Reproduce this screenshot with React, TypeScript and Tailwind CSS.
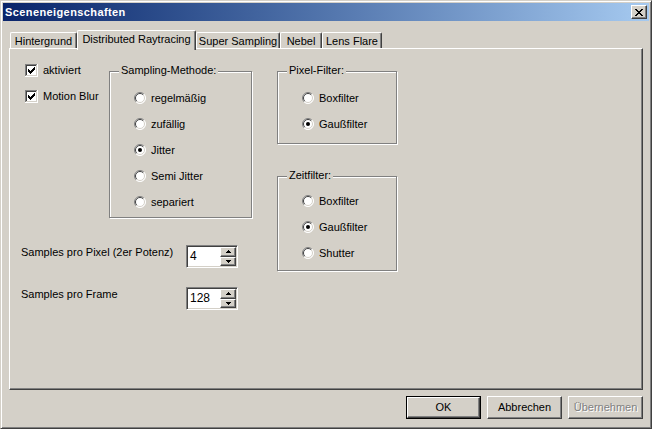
import React from "react";

const FONT = "font-['Liberation_Sans',Arial,sans-serif]";

function CheckBox({ label }: { label: string }) {
  return (
    <div className="flex items-center gap-[5px] h-[13px]">
      <svg width="13" height="13" viewBox="0 0 13 13" shapeRendering="crispEdges">
        <rect x="0" y="0" width="13" height="13" fill="#ffffff" />
        <rect x="0" y="0" width="12" height="1" fill="#808080" />
        <rect x="0" y="0" width="1" height="12" fill="#808080" />
        <rect x="1" y="1" width="10" height="1" fill="#404040" />
        <rect x="1" y="1" width="1" height="10" fill="#404040" />
        <rect x="1" y="11" width="11" height="1" fill="#d4d0c8" />
        <rect x="11" y="1" width="1" height="11" fill="#d4d0c8" />
        {[
          [3, 5],
          [4, 6],
          [5, 7],
          [6, 6],
          [7, 5],
          [8, 4],
          [9, 3],
        ].map(([x, y]) => (
          <rect key={x} x={x} y={y} width="1" height="3" fill="#000" />
        ))}
      </svg>
      <span>{label}</span>
    </div>
  );
}

function Radio({ label, checked }: { label: string; checked?: boolean }) {
  return (
    <div className="flex items-center gap-[5px] h-[12px]">
      <svg width="12" height="12" viewBox="0 0 12 12">
        <circle cx="6" cy="6" r="5.5" fill="#ffffff" />
        <path d="M2.1 9.9 A5.5 5.5 0 0 1 9.9 2.1" stroke="#808080" strokeWidth="1" fill="none" />
        <path d="M9.9 2.1 A5.5 5.5 0 0 1 2.1 9.9" stroke="#ffffff" strokeWidth="1" fill="none" />
        <path d="M2.8 9.2 A4.5 4.5 0 0 1 9.2 2.8" stroke="#404040" strokeWidth="1" fill="none" />
        <path d="M9.2 2.8 A4.5 4.5 0 0 1 2.8 9.2" stroke="#d4d0c8" strokeWidth="1" fill="none" />
        {checked && <circle cx="6" cy="6" r="2" fill="#000" />}
      </svg>
      <span>{label}</span>
    </div>
  );
}

function Group({
  label,
  className,
  children,
  pt,
}: {
  label: string;
  className: string;
  children: React.ReactNode;
  pt: string;
}) {
  return (
    <div
      className={`relative border border-[#808080] shadow-[1px_1px_0_#ffffff,inset_1px_1px_0_#ffffff] ${className}`}
    >
      <span className="absolute -top-[8px] left-[9px] bg-[#d4d0c8] px-[2px] leading-[13px]">
        {label}
      </span>
      <div className={`flex flex-col gap-[14px] pl-[24px] ${pt}`}>{children}</div>
    </div>
  );
}

function Spinner({ value }: { value: string }) {
  return (
    <div className="flex w-[52px] h-[23px] bg-white border border-t-[#808080] border-l-[#808080] border-r-white border-b-white shadow-[inset_1px_1px_0_#404040,inset_-1px_-1px_0_#d4d0c8] p-[1px]">
      <div className="flex-1 flex items-center pl-[2px] text-[12px]">{value}</div>
      <div className="flex flex-col w-[16px]">
        {[0, 1].map((i) => (
          <div
            key={i}
            className="flex-1 flex items-center justify-center bg-[#d4d0c8] border border-t-white border-l-white border-r-[#404040] border-b-[#404040] shadow-[inset_-1px_-1px_0_#808080]"
          >
            <svg width="5" height="3" viewBox="0 0 5 3" shapeRendering="crispEdges">
              {i === 0 ? (
                <path d="M2 0h1v1h1v1h1v1H0V2h1V1h1z" fill="#000" />
              ) : (
                <path d="M0 0h5v1H4v1H3v1H2V2H1V1H0z" fill="#000" />
              )}
            </svg>
          </div>
        ))}
      </div>
    </div>
  );
}

function Tab({ label, w, selected }: { label: string; w: string; selected?: boolean }) {
  if (selected) {
    return (
      <div
        className={`relative z-10 ${w} h-[20px] -mb-[2px] bg-[#d4d0c8] rounded-t-[2px] border-t border-l border-r border-t-white border-l-white border-r-[#404040] shadow-[inset_-1px_0_0_#808080] flex justify-center pt-[2px] leading-[13px]`}
      >
        {label}
      </div>
    );
  }
  return (
    <div
      className={`${w} h-[16px] bg-[#d4d0c8] rounded-t-[2px] border-t border-l border-r border-t-white border-l-white border-r-[#404040] shadow-[inset_-1px_0_0_#808080] flex justify-center pt-[2px] leading-[13px]`}
    >
      {label}
    </div>
  );
}

function Button({
  label,
  isDefault,
  disabled,
}: {
  label: string;
  isDefault?: boolean;
  disabled?: boolean;
}) {
  const inner = (
    <div
      className={`w-full h-full flex items-center justify-center border border-t-white border-l-white border-r-[#404040] border-b-[#404040] shadow-[inset_-1px_-1px_0_#808080] ${
        disabled ? "text-[#808080] [text-shadow:1px_1px_0_#ffffff]" : "text-black"
      }`}
    >
      {label}
    </div>
  );
  return (
    <div className={`w-[75px] h-[23px] ${isDefault ? "border border-black" : ""}`}>{inner}</div>
  );
}

export default function App() {
  return (
    <div
      className={`${FONT} text-[11px] leading-[13px] text-black w-[652px] h-[429px] bg-[#d4d0c8] border border-t-[#d4d0c8] border-l-[#d4d0c8] border-r-[#404040] border-b-[#404040] shadow-[inset_1px_1px_0_#ffffff,inset_-1px_-1px_0_#808080] p-[2px] overflow-hidden`}
    >
      {/* Title bar */}
      <div className="h-[18px] flex items-center justify-between bg-linear-to-r from-[#0a246a] to-[#a6caf0] pl-[2px] pr-[2px]">
        <span className="text-white font-bold tracking-[0.4px]">Sceneneigenschaften</span>
        <div className="w-[16px] h-[14px] bg-[#d4d0c8] border border-t-white border-l-white border-r-[#404040] border-b-[#404040] shadow-[inset_-1px_-1px_0_#808080] flex items-center justify-center">
          <svg width="8" height="7" viewBox="0 0 8 7" shapeRendering="crispEdges">
            <path
              d="M0 0h2v1h1v1h2V1h1V0h2v1H7v1H6v1H5v1h1v1h1v1h1v1H6V6H5V5H3v1H2v1H0V6h1V5h1V4h1V3H2V2H1V1H0z"
              fill="#000"
            />
          </svg>
        </div>
      </div>

      <div className="px-[6px]">
        {/* Tabs */}
        <div className="flex items-end h-[18px] mt-[9px]">
          <div className="ml-[1px]" />
          <Tab label="Hintergrund" w="w-[67px]" />
          <Tab label="Distributed Raytracing" w="w-[119px]" selected />
          <Tab label="Super Sampling" w="w-[84px]" />
          <Tab label="Nebel" w="w-[42px]" />
          <Tab label="Lens Flare" w="w-[60px]" />
        </div>

        {/* Panel */}
        <div className="h-[342px] border border-t-white border-l-white border-r-[#404040] border-b-[#404040] shadow-[inset_-1px_-1px_0_#808080]">
          <div className="flex pl-[11px]">
            {/* Column A */}
            <div className="flex flex-col w-[231px]">
              <div className="flex items-start">
                <div className="w-[88px] pl-[4px] pt-[15px] flex flex-col gap-[13px]">
                  <CheckBox label="aktiviert" />
                  <CheckBox label="Motion Blur" />
                </div>
                <Group label="Sampling-Methode:" className="mt-[22px] w-[143px] h-[147px]" pt="pt-[20px]">
                  <Radio label="regelmäßig" />
                  <Radio label="zufällig" />
                  <Radio label="Jitter" checked />
                  <Radio label="Semi Jitter" />
                  <Radio label="separiert" />
                </Group>
              </div>
              <div className="flex items-start mt-[27px]">
                <span className="w-[165px] mt-[1px]">Samples pro Pixel (2er Potenz)</span>
                <Spinner value="4" />
              </div>
              <div className="flex items-start mt-[19px]">
                <span className="w-[165px] mt-[1px]">Samples pro Frame</span>
                <Spinner value="128" />
              </div>
            </div>

            {/* Column B */}
            <div className="flex flex-col ml-[25px]">
              <Group label="Pixel-Filter:" className="mt-[22px] w-[120px] h-[73px]" pt="pt-[20px]">
                <Radio label="Boxfilter" />
                <Radio label="Gaußfilter" checked />
              </Group>
              <Group label="Zeitfilter:" className="mt-[32px] w-[120px] h-[95px]" pt="pt-[18px]">
                <Radio label="Boxfilter" />
                <Radio label="Gaußfilter" checked />
                <Radio label="Shutter" />
              </Group>
            </div>
          </div>
        </div>

        {/* Buttons */}
        <div className="flex justify-end gap-[6px] mt-[6px]">
          <Button label="OK" isDefault />
          <Button label="Abbrechen" />
          <Button label="Übernehmen" disabled />
        </div>
      </div>
    </div>
  );
}
